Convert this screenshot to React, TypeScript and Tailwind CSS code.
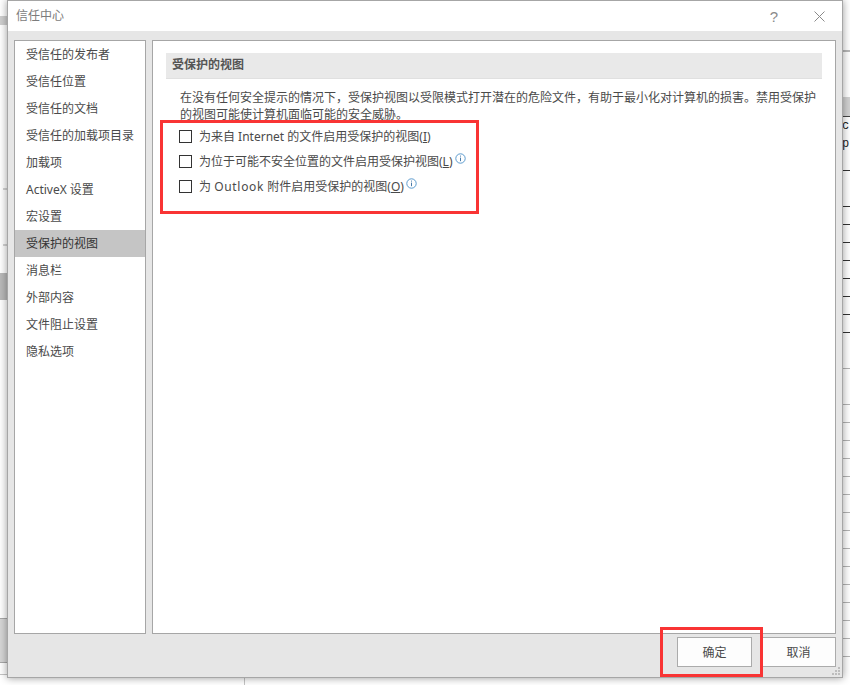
import React from 'react';

const navItems = [
  '受信任的发布者',
  '受信任位置',
  '受信任的文档',
  '受信任的加载项目录',
  '加载项',
  'ActiveX 设置',
  '宏设置',
  '受保护的视图',
  '消息栏',
  '外部内容',
  '文件阻止设置',
  '隐私选项',
];

// sheet rows showing behind the dialog: [row height, classes]
const leftStrip: [number, string][] = [
  [16, ''],
  [9, 'bg-[#cfcfcf]'],
  [163, ''],
  [2, 'ml-[3px] bg-[#d4d4d4]'],
  [54, ''],
  [2, 'ml-[3px] bg-[#d4d4d4]'],
  [27, ''],
  [27, 'bg-[#b9b9b9]'],
  [318, ''],
  [45, 'border-y border-[#a8a8a8] bg-[#d6d6d6]'],
];

const rightStrip: [number, string][] = [
  [50, ''],
  [2, 'bg-[#b8b8b8]'],
  [45, ''],
  [19, 'bg-[#d2d2d2]'],
  [1, 'bg-[#444]'],
];

const darkLines = [18, 36, 18, 18, 18, 18, 18, 18, 18];
const lightLines = [36, 36, 18, 18, 18, 18, 18, 18, 18, 18, 18, 18, 18, 18, 18, 18];

function InfoIcon() {
  return (
    <svg width="11" height="11" viewBox="0 0 11 11" fill="none" className="shrink-0">
      <circle cx="5.5" cy="5.5" r="4.7" stroke="#4a90c8" strokeWidth="0.9" />
      <path d="M5.5 4.6V8.2" stroke="#4a7ba8" strokeWidth="1" />
      <path d="M5.5 2.6V3.6" stroke="#4a7ba8" strokeWidth="1" />
    </svg>
  );
}

function Option({ children, info }: { children: React.ReactNode; info?: boolean }) {
  return (
    <div className="flex h-[25px] items-center">
      <span className="h-[13px] w-[13px] shrink-0 border border-[#333] bg-white" />
      <span className="ml-[7px] whitespace-nowrap">{children}</span>
      {info && <span className="-mt-1.5 ml-[2px] flex"><InfoIcon /></span>}
    </div>
  );
}

function Backdrop() {
  return (
    <div className="absolute inset-0 flex justify-between overflow-hidden bg-white">
      <div className="flex w-[8px] flex-col">
        {leftStrip.map(([h, cls], i) => (
          <div key={i} className={`shrink-0 ${cls}`} style={{ height: h }} />
        ))}
      </div>
      <div className="flex w-[8px] flex-col font-['Liberation_Mono',monospace] text-[12px] leading-[18px] text-[#222]">
        {rightStrip.map(([h, cls], i) => (
          <div key={i} className={`shrink-0 ${cls}`} style={{ height: h }} />
        ))}
        <div className="h-[18px] shrink-0">c</div>
        <div className="h-[18px] shrink-0">p</div>
        {darkLines.map((h, i) => (
          <div key={i} className="shrink-0 border-b border-[#333]" style={{ height: h }} />
        ))}
        {lightLines.map((h, i) => (
          <div key={i} className="shrink-0 border-b border-[#b4b4b4]" style={{ height: h }} />
        ))}
      </div>
      {/* sheet grid just under the dialog */}
      <div className="absolute left-0 top-[674px] h-[11px] w-[245px] border-r border-t border-[#c4c4c4]" />
    </div>
  );
}

export default function App() {
  return (
    <div className="relative h-[685px] w-[850px] overflow-hidden font-['Noto_Sans','Noto_Sans_CJK_SC',sans-serif] text-[12px] text-[#4a4a4a]">
      <Backdrop />

      {/* dialog window */}
      <div className="absolute left-[7px] top-0 flex h-[678px] w-[836px] flex-col border border-[#a6a6a6] bg-[#e6e6e6] shadow-[0_0_8px_rgba(0,0,0,0.4)]">
        <div className="flex h-[30px] shrink-0 items-center justify-between bg-white pl-[8px] pr-[17px]">
          <span className="text-[#7c7c7c]">信任中心</span>
          <div className="flex items-center gap-[36px] text-[#8a8a8a]">
            <span className="font-['Liberation_Sans',sans-serif] text-[15px] leading-none">?</span>
            <svg width="11" height="11" viewBox="0 0 11 11" fill="none">
              <path d="M0.5 0.5L10.5 10.5M10.5 0.5L0.5 10.5" stroke="#8a8a8a" strokeWidth="1" />
            </svg>
          </div>
        </div>

        <div className="flex min-h-0 flex-1 gap-[6px] px-[6px] pt-[9px]">
          {/* nav */}
          <div className="h-[594px] w-[132px] shrink-0 border border-[#a6a6a6] bg-white">
            {navItems.map(item => (
              <div
                key={item}
                className={`flex h-[27px] items-center pl-[11px] pt-px ${item === '受保护的视图' ? 'bg-[#c5c5c5] text-[#333]' : ''}`}
              >
                {item}
              </div>
            ))}
          </div>

          {/* content */}
          <div className="h-[594px] min-w-0 flex-1 border border-[#a6a6a6] bg-white px-[13px] pt-[12px]">
            <div className="flex h-[26px] items-center border-b border-[#e0e0e0] bg-[#e9e9e9] pb-[2px] pl-[6px] font-bold text-[#555]">
              受保护的视图
            </div>
            <p className="mb-0 ml-[14px] mr-[6px] mt-[10px] leading-[17px]">
              在没有任何安全提示的情况下，受保护视图以受限模式打开潜在的危险文件，有助于最小化对计算机的损害。禁用受保护的视图可能使计算机面临可能的安全威胁。
            </p>
            <div className="ml-[13px] mt-[1px]">
              <Option>为来自 Internet 的文件启用受保护的视图(<span className="underline">I</span>)</Option>
              <Option info>为位于可能不安全位置的文件启用受保护视图(<span className="underline">L</span>)</Option>
              <Option info>为 <span className="tracking-[0.7px]">Outlook</span> 附件启用受保护的视图(<span className="underline">O</span>)</Option>
            </div>
          </div>
        </div>

        <div className="flex h-[44px] shrink-0 items-start justify-end gap-[9px] pr-[6px] pt-[4px]">
          <button className="h-[30px] w-[75px] border border-[#ababab] bg-[#fdfdfd] pt-px">确定</button>
          <button className="h-[30px] w-[75px] border border-[#ababab] bg-[#fdfdfd] pt-px">取消</button>
        </div>

        {/* resize grip */}
        <svg width="9" height="9" viewBox="0 0 9 9" className="absolute bottom-[1px] right-[1px]" fill="#bdbdbd">
          <rect x="6" y="0" width="2" height="2" />
          <rect x="3" y="3" width="2" height="2" />
          <rect x="6" y="3" width="2" height="2" />
          <rect x="0" y="6" width="2" height="2" />
          <rect x="3" y="6" width="2" height="2" />
          <rect x="6" y="6" width="2" height="2" />
        </svg>
      </div>

      {/* red annotation frames drawn over the shot */}
      <div className="pointer-events-none absolute left-[160px] top-[120px] h-[94px] w-[319px] border-[3px] border-[#f93434]" />
      <div className="pointer-events-none absolute left-[660px] top-[627px] h-[50px] w-[103px] border-[3px] border-[#f93434]" />
    </div>
  );
}
